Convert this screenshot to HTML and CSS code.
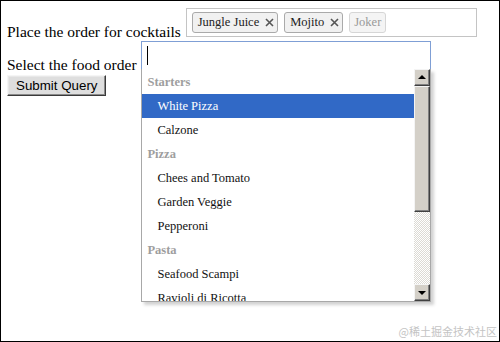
FILE: index.html
```html
<!DOCTYPE html>
<html lang="en">
<head>
<meta charset="UTF-8" />
<meta name="viewport" content="width=device-width, initial-scale=1" />
<title>Order form</title>
<link rel="stylesheet" href="styles.css">
</head>
<body>
  <div class="page">
    <form class="order">
      <div class="line">
        Place the order for cocktails
        <div class="tags">
          <div class="tags-inner">
            <span class="tag">Jungle Juice
              <svg class="tag-x" width="9" height="9" viewBox="0 0 9 9"><path d="M1 1L8 8M8 1L1 8" stroke="#555" stroke-width="1.6"/></svg>
            </span>
            <span class="tag">Mojito
              <svg class="tag-x" width="9" height="9" viewBox="0 0 9 9"><path d="M1 1L8 8M8 1L1 8" stroke="#555" stroke-width="1.6"/></svg>
            </span>
            <span class="tag tag-disabled">Joker</span>
          </div>
        </div>
      </div>
      <div class="line">
        Select the food order
        <div class="picker">
          <div class="picker-field"><span class="caret"></span></div>
          <div class="menu">
            <ul class="menu-list">
              <li class="group">Starters</li>
              <li class="option active">White Pizza</li>
              <li class="option">Calzone</li>
              <li class="group">Pizza</li>
              <li class="option">Chees and Tomato</li>
              <li class="option">Garden Veggie</li>
              <li class="option">Pepperoni</li>
              <li class="group">Pasta</li>
              <li class="option">Seafood Scampi</li>
              <li class="option">Ravioli di Ricotta</li>
            </ul>
            <div class="scrollbar">
              <div class="sb-btn"><span class="arrow-up"></span></div>
              <div class="sb-thumb"></div>
              <div class="sb-track"></div>
              <div class="sb-btn"><span class="arrow-down"></span></div>
            </div>
          </div>
        </div>
      </div>
      <button class="submit" type="button">Submit Query</button>
    </form>
    <div class="watermark">@稀土掘金技术社区</div>
  </div>
</body>
</html>
```

FILE: styles.css
```css
html, body {
  margin: 0;
  background: #fff;
}

body {
  font-family: "Liberation Serif", "Times New Roman", serif;
  font-size: 15.5px;
  color: #000;
}

.page {
  position: relative;
  width: 500px;
  height: 342px;
  box-sizing: border-box;
  border: 1px solid #000;
  padding: 7px 6px;
}

.line {
  white-space: nowrap;
}

/* cocktails multi select */
.tags {
  display: inline-block;
  vertical-align: baseline;
  overflow: hidden;
  width: 291px;
  height: 29px;
  box-sizing: border-box;
  border: 1px solid #c4c4c4;
  padding: 3px 5px;
  margin-left: 1px;
}

.tags-inner {
  display: flex;
  gap: 6px;
}

.tag {
  display: flex;
  align-items: center;
  height: 21px;
  box-sizing: border-box;
  padding: 0 3px 0 5px;
  border: 1px solid #aaa;
  border-radius: 3px;
  background: #f1f1f1;
  font-size: 12.5px;
  color: #222;
}

.tag-x {
  margin-left: 6px;
}

.tag-disabled {
  padding: 0 4px;
  border-color: #d6d6d6;
  background: #f4f4f4;
  color: #999;
}

/* food picker */
.picker {
  display: inline-block;
  vertical-align: baseline;
  position: relative;
  margin-left: 1px;
}

.picker-field {
  width: 290px;
  height: 29px;
  box-sizing: border-box;
  border: 1px solid #7f9fd5;
  padding: 4px 5px;
  background: #fff;
}

.caret {
  display: block;
  width: 1px;
  height: 19px;
  background: #000;
}

.menu {
  position: absolute;
  top: 28px;
  left: 0;
  width: 290px;
  height: 233px;
  box-sizing: border-box;
  display: flex;
  border: 1px solid #a8a8a8;
  border-top: none;
  background: #fff;
  box-shadow: 3px 3px 3px rgba(0, 0, 0, 0.18);
  z-index: 2;
}

.menu-list {
  flex: 1;
  margin: 0;
  padding: 1px 0 0;
  list-style: none;
  overflow: hidden;
  font-size: 12.5px;
}

.menu-list li {
  height: 24px;
  line-height: 24px;
}

.group {
  padding-left: 5px;
  font-weight: bold;
  color: #9e9e9e;
}

.option {
  padding-left: 15px;
  color: #111;
}

.option.active {
  background: #3169c6;
  color: #fff;
}

.scrollbar {
  width: 16px;
  display: flex;
  flex-direction: column;
}

.sb-btn,
.sb-thumb {
  box-sizing: border-box;
  background: #d4d0c8;
  border: 1px solid;
  border-color: #f4f4f4 #404040 #404040 #f4f4f4;
  box-shadow: inset -1px -1px #808080;
}

.sb-btn {
  height: 17px;
  display: flex;
  align-items: center;
  justify-content: center;
}

.sb-thumb {
  height: 126px;
}

.sb-track {
  flex: 1;
  background-color: #fff;
  background-image: repeating-conic-gradient(#dcdad4 0 25%, #fff 0 50%);
  background-size: 2px 2px;
}

.arrow-up,
.arrow-down {
  width: 0;
  height: 0;
  border-left: 4px solid transparent;
  border-right: 4px solid transparent;
}

.arrow-up {
  border-bottom: 4px solid #000;
  margin-bottom: 1px;
}

.arrow-down {
  border-top: 4px solid #000;
}

.submit {
  display: block;
  margin-top: 1px;
  height: 21px;
  padding: 0 8px;
  font-family: "Liberation Sans", Arial, sans-serif;
  font-size: 13.33px;
  color: #000;
  background: #dedede;
  border: 1px solid;
  border-color: #f5f5f5 #3a3a3a #3a3a3a #f5f5f5;
  box-shadow: inset -1px -1px #8a8a8a, inset 1px 1px #e8e8e8;
}

.watermark {
  position: absolute;
  right: 2px;
  bottom: 2px;
  font-family: "Noto Sans CJK SC", sans-serif;
  font-size: 11px;
  color: #c4c4c4;
}
```
